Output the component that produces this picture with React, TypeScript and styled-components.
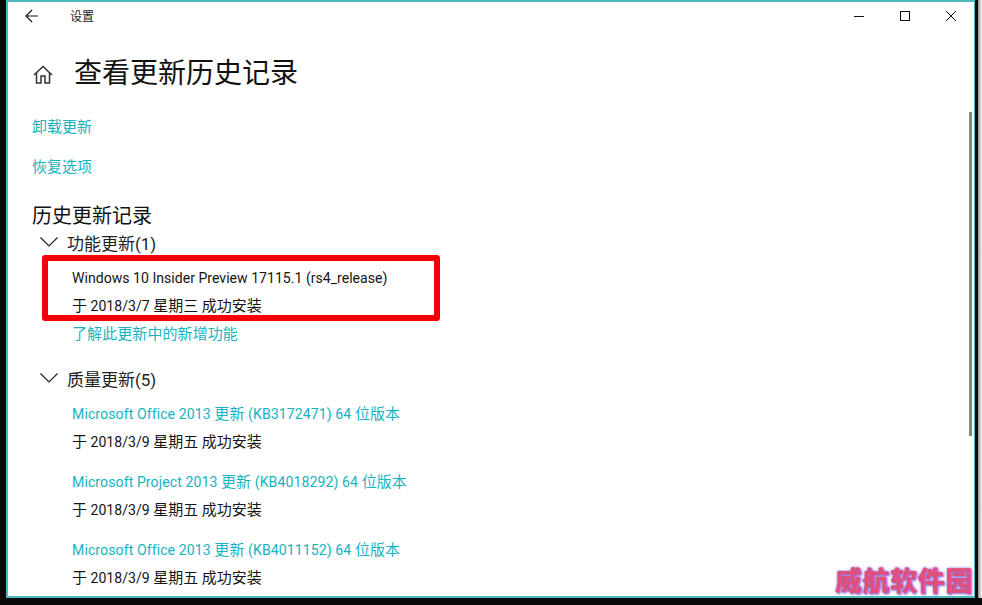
import React from "react";
import styled, { createGlobalStyle } from "styled-components";

const Global = createGlobalStyle`
  html, body { margin: 0; padding: 0; background: #0a0a0a; }
  body { width: 982px; height: 605px; overflow: hidden; font-family: "Roboto", "Noto Sans CJK SC", sans-serif; }
`;

const Screen = styled.div`
  width: 982px;
  height: 605px;
  box-sizing: border-box;
  padding: 0 0 7px 6px;
  display: flex;
  background: #0a0a0a;
`;

const Win = styled.div`
  position: relative;
  width: 969px;
  flex: none;
  box-sizing: border-box;
  background: #fff;
  border: 1px solid #4db8c0;
  border-top-width: 2px;
  border-left-width: 2px;
  border-bottom-width: 2px;
  overflow: hidden;
  display: flex;
  flex-direction: column;
`;

const Backdrop = styled.div`
  flex: 1;
  margin-left: 3px;
  background: linear-gradient(90deg, #8f8f8f 0, #bdbdbd 40%, #f4f4f4 100%);
`;

const TitleBar = styled.div`
  height: 30px;
  flex: none;
  display: flex;
  align-items: center;
  padding-left: 17px;
  color: #111;
`;

const BackBtn = styled.svg`
  width: 14px;
  height: 14px;
  margin-right: 31px;
  margin-top: -2px;
`;

const AppName = styled.span`
  font-size: 12px;
  line-height: 16px;
  color: #222;
  flex: 1;
`;

const WinBtns = styled.div`
  display: flex;
  align-items: center;
  gap: 36px;
  padding-right: 18px;
  margin-top: -2px;
`;

const WinIcon = styled.svg`
  width: 10px;
  height: 10px;
  display: block;
`;

const Content = styled.div`
  flex: 1;
  padding-left: 24px;
  display: flex;
  flex-direction: column;
`;

const Header = styled.div`
  display: flex;
  align-items: center;
  margin-top: 22px;
  height: 40px;
`;

const HomeIcon = styled.svg`
  width: 20px;
  height: 20px;
  margin: 0 22px 0 1px;
  flex: none;
  color: #333;
`;

const PageTitle = styled.h1`
  margin: 0 0 0 -1px;
  font-size: 28px;
  line-height: 40px;
  font-weight: 400;
  color: #111;
`;

const TopLink = styled.div<{ $top: number }>`
  font-size: 15px;
  line-height: 20px;
  color: #17b3bf;
  margin-top: ${(p) => p.$top}px;
`;

const SectionTitle = styled.h2`
  margin: 25px 0 0;
  font-size: 20px;
  line-height: 28px;
  font-weight: 400;
  color: #111;
`;

const GroupHead = styled.div<{ $top: number }>`
  display: flex;
  align-items: center;
  margin-top: ${(p) => p.$top}px;
  height: 24px;
  font-size: 17px;
  color: #222;
`;

const Chevron = styled.svg`
  width: 18px;
  height: 10px;
  margin: 0 9px 0 8px;
`;

const Items = styled.div`
  padding-left: 40px;
  display: flex;
  flex-direction: column;
`;

const Line = styled.div<{ $link?: boolean; $gap?: number }>`
  font-size: 14.1px;
  line-height: 28px;
  height: 28px;
  white-space: nowrap;
  color: ${(p) => (p.$link ? "#17b3bf" : "#151515")};
  letter-spacing: ${(p) => (p.$link ? "0.08px" : "0")};
  margin-top: ${(p) => p.$gap ?? 0}px;
`;

const Han = styled.span`
  font-size: 15px;
`;

const RedBox = styled.div`
  position: absolute;
  left: 34px;
  top: 253px;
  width: 398px;
  height: 66px;
  box-sizing: border-box;
  border: 6px solid #f50008;
  border-radius: 3px;
`;

const Track = styled.div`
  position: absolute;
  right: 2px;
  top: 110px;
  width: 3px;
  height: 324px;
  background: #858585;
`;

const Mark = styled.div`
  position: absolute;
  right: 1px;
  bottom: 0;
  font-family: "Noto Sans CJK SC", sans-serif;
  font-weight: 900;
  font-size: 27px;
  letter-spacing: 0.6px;
  line-height: 32px;
  color: #e0507c;
  text-shadow: 0 0 3px #8f6be8, 1px 1px 2px #8f6be8;
  white-space: nowrap;
`;

const history = [
  ["Microsoft Office 2013 更新 (KB3172471) 64 位版本", "于 2018/3/9 星期五 成功安装"],
  ["Microsoft Project 2013 更新 (KB4018292) 64 位版本", "于 2018/3/9 星期五 成功安装"],
  ["Microsoft Office 2013 更新 (KB4011152) 64 位版本", "于 2018/3/9 星期五 成功安装"],
];

const Mixed = ({ text }: { text: string }) => (
  <>
    {text.split(/([\u4e00-\u9fff]+)/).map((run, i) =>
      i % 2 === 1 ? <Han key={i}>{run}</Han> : run
    )}
  </>
);

const Caret = () => (
  <Chevron viewBox="0 0 18 10" fill="none" stroke="#222" strokeWidth="1.2">
    <path d="M0.5 0.5 L9 9 L17.5 0.5" />
  </Chevron>
);

export default function App() {
  return (
    <Screen>
      <Global />
      <Win>
        <TitleBar>
          <BackBtn viewBox="0 0 14 14" fill="none" stroke="#111" strokeWidth="1.1">
            <path d="M13 7 H1 M7 1 L1 7 L7 13" />
          </BackBtn>
          <AppName>设置</AppName>
          <WinBtns>
            <WinIcon viewBox="0 0 10 10" stroke="#111" fill="none"><path d="M0 5.5 H10" /></WinIcon>
            <WinIcon viewBox="0 0 10 10" stroke="#111" fill="none"><rect x="0.5" y="0.5" width="9" height="9" /></WinIcon>
            <WinIcon viewBox="0 0 10 10" stroke="#111" fill="none"><path d="M0 0 L10 10 M10 0 L0 10" /></WinIcon>
          </WinBtns>
        </TitleBar>
        <Content>
          <Header>
            <HomeIcon viewBox="0 0 20 20" fill="none" stroke="currentColor" strokeWidth="1.5">
              <path d="M1 11 L10 2.5 L19 11 M3.5 9 V19 H8 V12 H12 V19 H16.5 V9" />
            </HomeIcon>
            <PageTitle>查看更新历史记录</PageTitle>
          </Header>
          <TopLink $top={23}>卸载更新</TopLink>
          <TopLink $top={20}>恢复选项</TopLink>
          <SectionTitle>历史更新记录</SectionTitle>
          <GroupHead $top={0}><Caret />功能更新(1)</GroupHead>
          <Items>
            <Line $gap={10}>Windows 10 Insider Preview 17115.1 (rs4_release)</Line>
            <Line><Mixed text="于 2018/3/7 星期三 成功安装" /></Line>
            <Line $link><Mixed text="了解此更新中的新增功能" /></Line>
          </Items>
          <GroupHead $top={18}><Caret />质量更新(5)</GroupHead>
          <Items>
            {history.map(([a, b], i) => (
              <React.Fragment key={a}>
                <Line $link $gap={i === 0 ? 10 : 12}><Mixed text={a} /></Line>
                <Line><Mixed text={b} /></Line>
              </React.Fragment>
            ))}
          </Items>
        </Content>
        <RedBox />
        <Track />
        <Mark>威航软件园</Mark>
      </Win>
      <Backdrop />
    </Screen>
  );
}
